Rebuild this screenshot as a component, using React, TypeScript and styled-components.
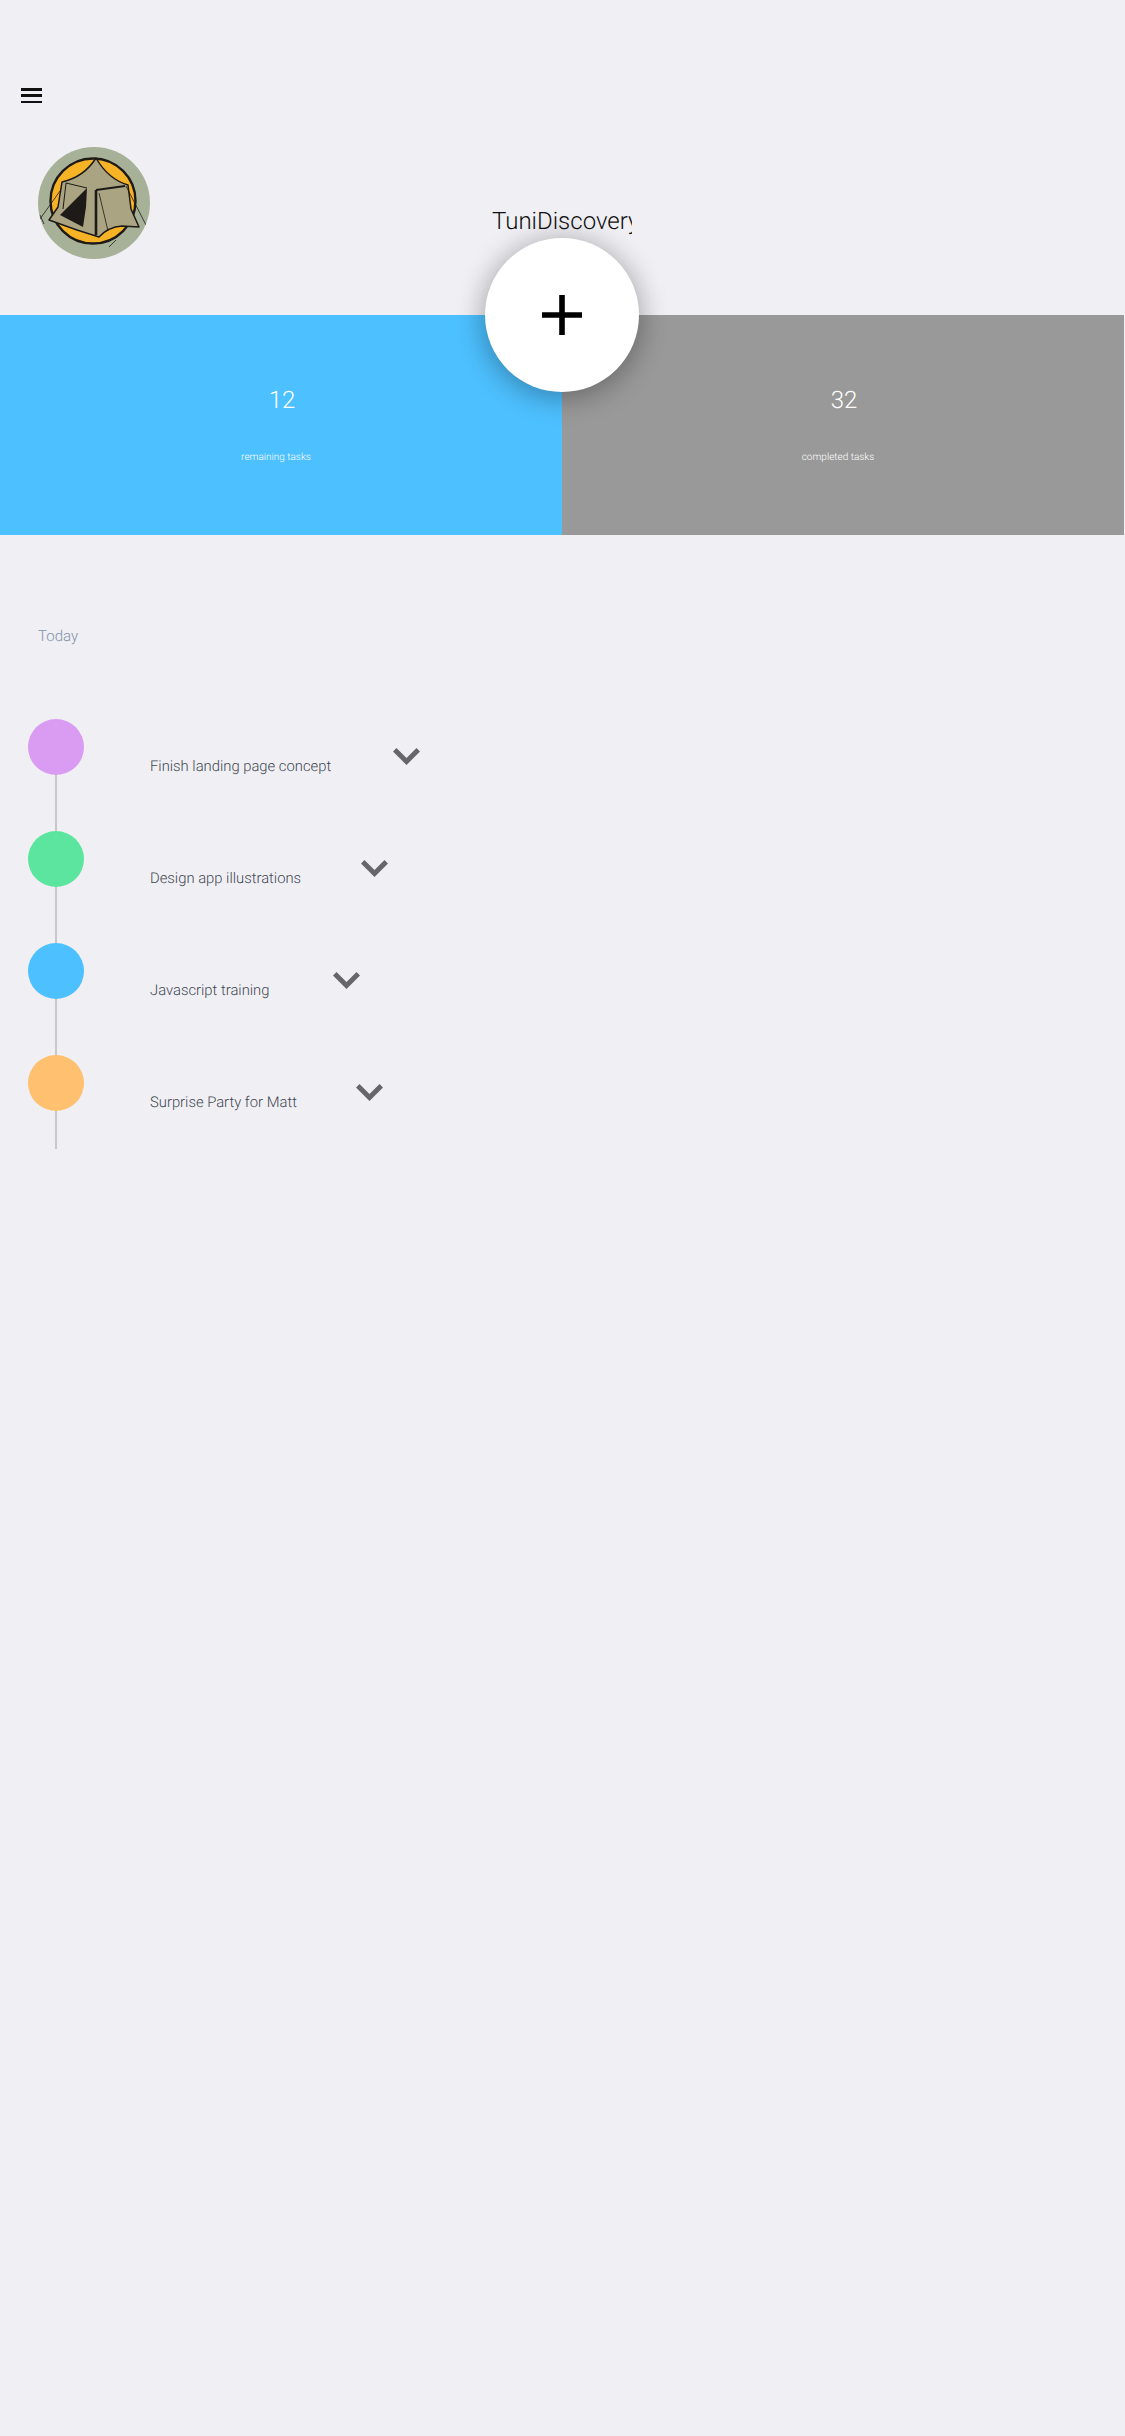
import React from "react";
import styled, { createGlobalStyle } from "styled-components";

const Global = createGlobalStyle`
  html, body { margin: 0; padding: 0; background: #efeff4; }
  body {
    font-family: Roboto, "Liberation Sans", sans-serif;
    text-rendering: geometricPrecision;
  }
  * { box-sizing: border-box; }
`;

const Page = styled.div`
  width: 1125px;
  height: 2436px;
  background: #efeff4;
  position: relative;
  overflow: hidden;
`;

const Header = styled.header`
  height: 315px;
  padding: 88px 0 0 21px;
`;

const MenuButton = styled.div`
  width: 21px;
  height: 15px;
  display: flex;
  flex-direction: column;
  justify-content: space-between;
`;

const MenuBar = styled.span`
  display: block;
  height: 2.5px;
  background: #111;
`;

const Brand = styled.div`
  display: flex;
  align-items: flex-start;
  margin: 44px 0 0 17px;
`;

const Avatar = styled.svg`
  width: 112px;
  height: 112px;
  border-radius: 50%;
  flex: none;
`;

const Title = styled.h1`
  margin: 59px 0 0 342px;
  width: 140px;
  overflow: hidden;
  white-space: nowrap;
  font-size: 24px;
  line-height: 30px;
  font-weight: 300;
  color: #111;
`;

const StatsBand = styled.section`
  display: flex;
  width: 1124px;
  height: 220px;
`;

const StatPanel = styled.div<{ $bg: string }>`
  flex: 1;
  background: ${(p) => p.$bg};
  color: #fff;
  display: flex;
  flex-direction: column;
  align-items: center;
  padding-top: 71px;
`;

const StatNumber = styled.div`
  font-size: 24px;
  line-height: 28px;
  font-weight: 300;
  margin-left: 2px;
`;

const StatLabel = styled.div`
  margin: 37px 10px 0 0;
  font-size: 10px;
  line-height: 14px;
  font-weight: 300;
`;

const Fab = styled.button`
  position: absolute;
  left: 485px;
  top: 238px;
  width: 154px;
  height: 154px;
  padding: 0;
  border: none;
  border-radius: 50%;
  background: #fff;
  box-shadow: 0 4px 26px 4px rgba(0, 0, 0, 0.28);
  display: flex;
  align-items: center;
  justify-content: center;
`;

const Section = styled.section`
  padding: 91px 0 0 28px;
`;

const SectionTitle = styled.div`
  margin-left: 10px;
  font-size: 15px;
  line-height: 20px;
  font-weight: 300;
  color: #8492a6;
`;

const Timeline = styled.div`
  margin-top: 73px;
  display: flex;
  flex-direction: column;
`;

const Row = styled.div`
  display: flex;
  height: 112px;
`;

const Marker = styled.div`
  width: 56px;
  display: flex;
  flex-direction: column;
  align-items: center;
  flex: none;
`;

const Dot = styled.div<{ $color: string }>`
  width: 56px;
  height: 56px;
  border-radius: 50%;
  background: ${(p) => p.$color};
  flex: none;
`;

const Connector = styled.div<{ $length: number }>`
  width: 2px;
  height: ${(p) => p.$length}px;
  background: #c8c8c8;
`;

const RowBody = styled.div<{ $gap: number }>`
  margin-left: 66px;
  display: flex;
  align-items: flex-start;
  gap: ${(p) => p.$gap}px;
`;

const TaskText = styled.div`
  margin-top: 37px;
  font-size: 14.8px;
  line-height: 20px;
  font-weight: 300;
  color: #3f4750;
  white-space: nowrap;
`;

const Chevron = styled.svg`
  margin-top: 29px;
  width: 27px;
  height: 17px;
  flex: none;
`;

const tasks = [
  { text: "Finish landing page concept", color: "#da9bf2", length: 56, gap: 62 },
  { text: "Design app illustrations", color: "#5ce59e", length: 56, gap: 60 },
  { text: "Javascript training", color: "#4dc0ff", length: 56, gap: 64 },
  { text: "Surprise Party for Matt", color: "#ffc070", length: 38, gap: 59 },
];

const TentLogo = () => (
  <Avatar viewBox="0 0 112 112">
    <rect width="112" height="112" fill="#a7b198" />
    <circle cx="55" cy="54" r="42.5" fill="#f6b326" stroke="#1d1a17" strokeWidth="2.4" />
    <path d="M58 12 Q46 30 24 35 L20 60 L11 73 L39 83 L61 90 Q70 80 84 79 L101 80 L93 62 L90 38 Q70 32 58 12 Z" fill="#aaa483" />
    <path d="M58 11 Q46 30 24 35 L20 60 L11 73 L39 83 L61 90 Q70 80 84 79 L101 80 L93 62 L90 38 Q70 32 58 11 Z" fill="none" stroke="#1d1a17" strokeWidth="1.5" strokeLinejoin="round" />
    <path d="M49 41 L22 68 L45 80 L48 60 Z" fill="#1d1a17" />
    <path d="M28 36 L49 41" fill="none" stroke="#1d1a17" strokeWidth="1" />
    <path d="M28 36 L25 62" fill="none" stroke="#1d1a17" strokeWidth="1" />
    <path d="M58 43 L58 88" fill="none" stroke="#1d1a17" strokeWidth="2.6" />
    <path d="M58 43 L87 39" fill="none" stroke="#1d1a17" strokeWidth="1.8" />
    <path d="M61 46 L70 84 M88 39 L108 78 M22 44 L2 72 M2 68 L6 77 M78 93 L71 100" fill="none" stroke="#1d1a17" strokeWidth="0.8" />
  </Avatar>
);

export default function App() {
  return (
    <Page>
      <Global />
      <Header>
        <MenuButton>
          <MenuBar />
          <MenuBar />
          <MenuBar />
        </MenuButton>
        <Brand>
          <TentLogo />
          <Title>TuniDiscovery</Title>
        </Brand>
      </Header>
      <StatsBand>
        <StatPanel $bg="#4dc0ff">
          <StatNumber>12</StatNumber>
          <StatLabel>remaining tasks</StatLabel>
        </StatPanel>
        <StatPanel $bg="#999999">
          <StatNumber>32</StatNumber>
          <StatLabel>completed tasks</StatLabel>
        </StatPanel>
      </StatsBand>
      <Fab aria-label="Add task">
        <svg width="42" height="42" viewBox="0 0 42 42">
          <path d="M21 1 V41 M1 21 H41" stroke="#000" strokeWidth="5.6" fill="none" />
        </svg>
      </Fab>
      <Section>
        <SectionTitle>Today</SectionTitle>
        <Timeline>
          {tasks.map((t) => (
            <Row key={t.text}>
              <Marker>
                <Dot $color={t.color} />
                <Connector $length={t.length} />
              </Marker>
              <RowBody $gap={t.gap}>
                <TaskText>{t.text}</TaskText>
                <Chevron viewBox="0 0 27 17">
                  <path d="M0 3.5 L3.5 0 L13.5 10 L23.5 0 L27 3.5 L13.5 17 Z" fill="#66666b" />
                </Chevron>
              </RowBody>
            </Row>
          ))}
        </Timeline>
      </Section>
    </Page>
  );
}
